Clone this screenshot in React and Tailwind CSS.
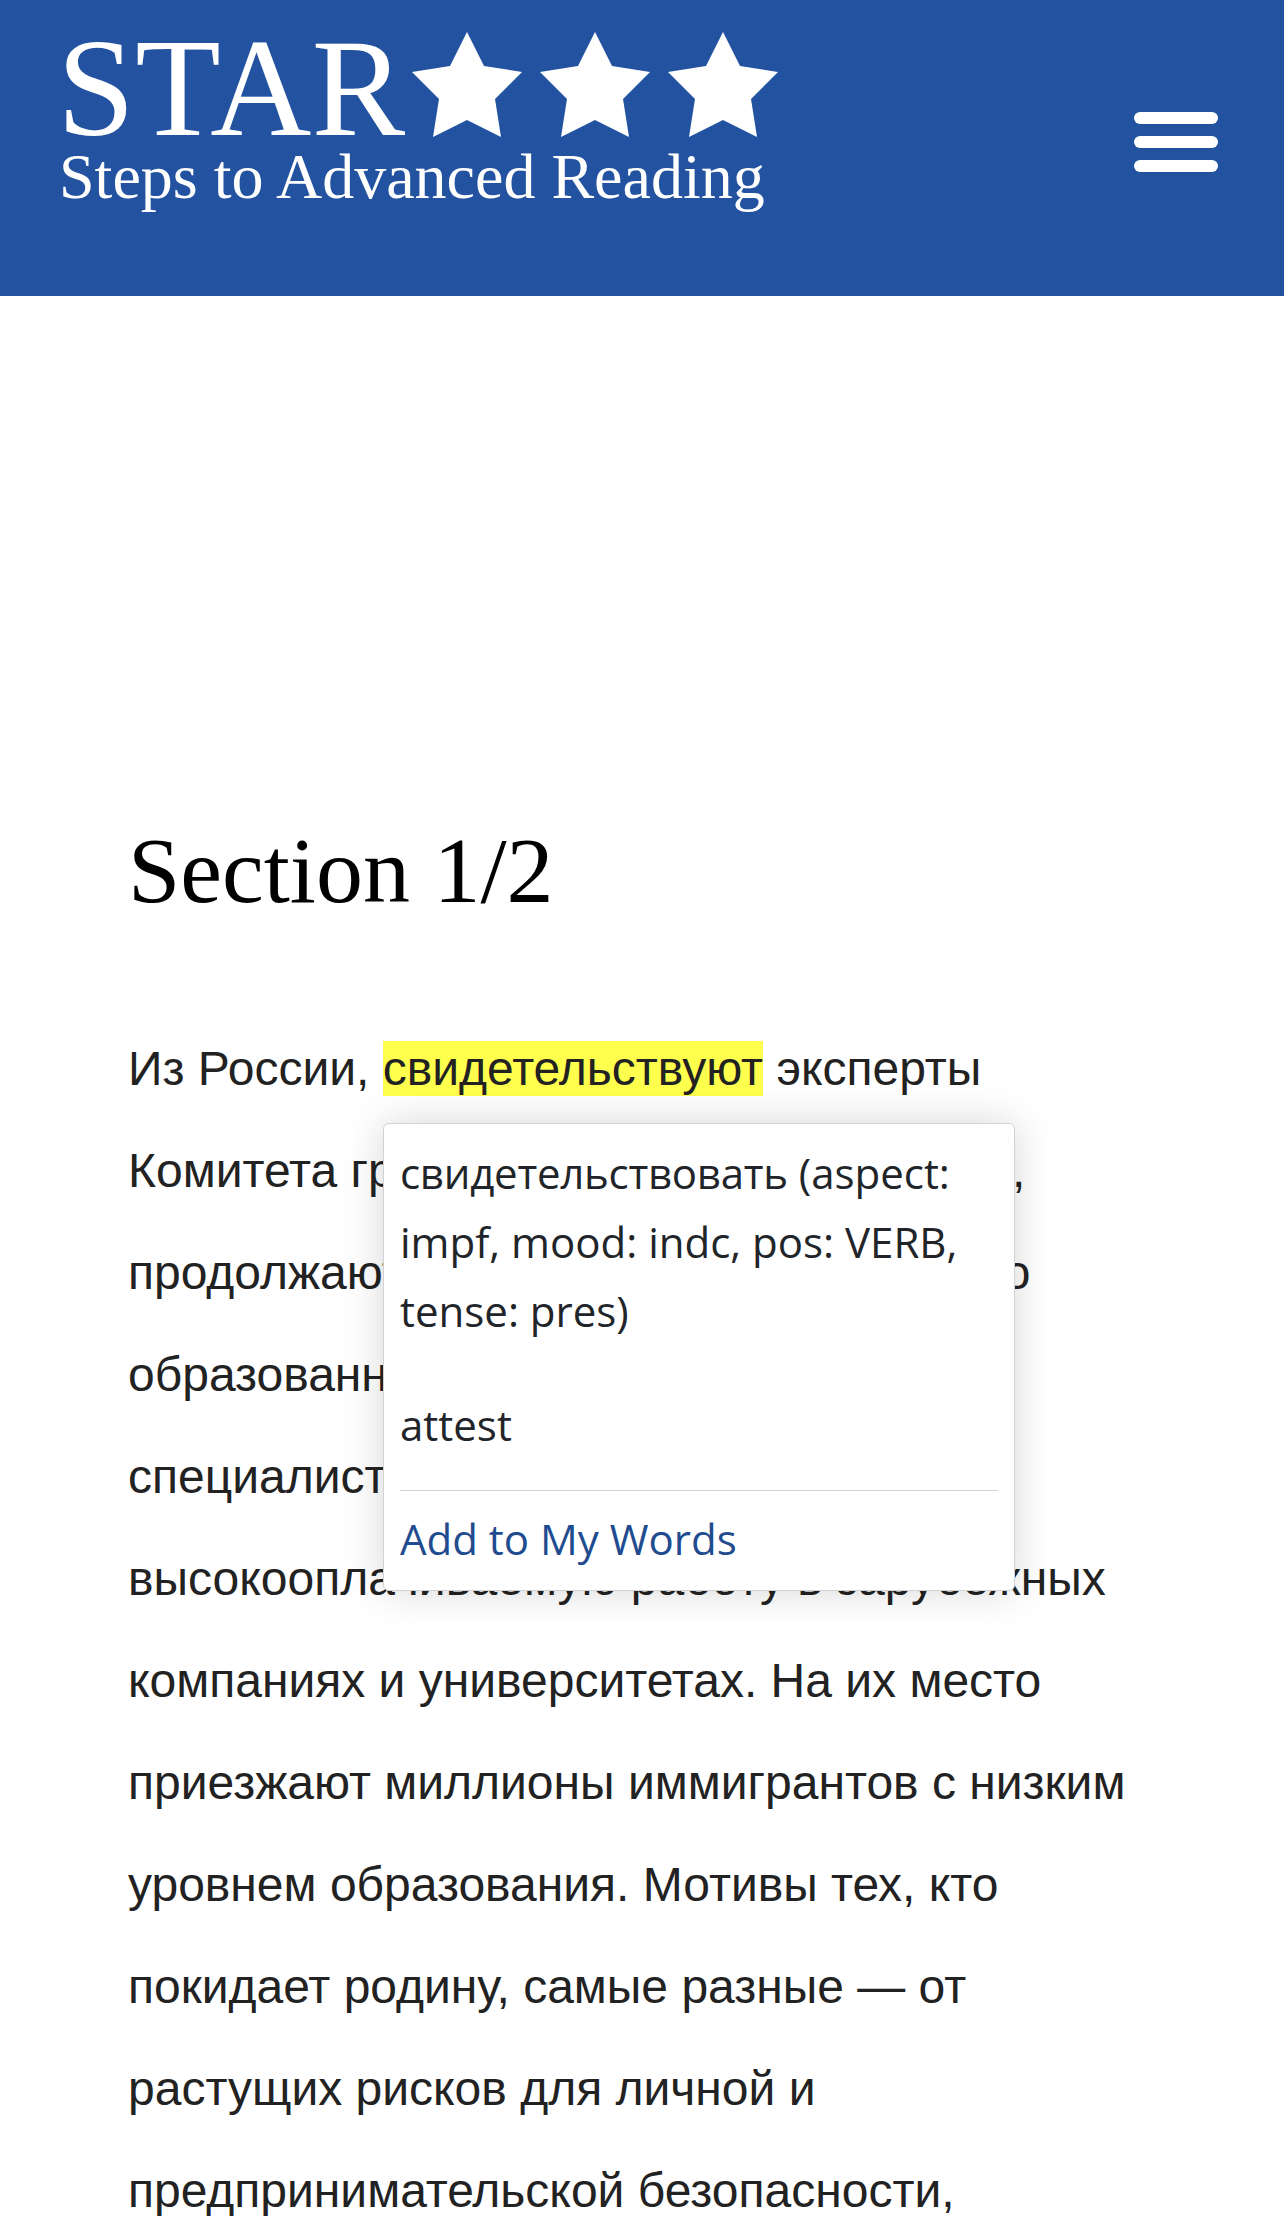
import React from "react";

function Star() {
  return (
    <svg width="112" height="105" viewBox="0 0 112 105" className="shrink-0">
      <path d="M56 0 L73 34 L111 40 L84 67 L90 105 L56 88 L22 105 L28 67 L1 40 L39 34 Z" fill="#fff" />
    </svg>
  );
}

function Logo() {
  return (
    <div className="text-white font-['Liberation_Serif',serif]">
      <div className="flex items-start h-[142px]">
        <span className="w-[354px] mt-[38px] text-[140px] leading-[100px] tracking-[0.5px]">STAR</span>
        <div className="flex gap-[16px] mt-[32px]">
          <Star />
          <Star />
          <Star />
        </div>
      </div>
      <div className="ml-[2px] text-[64px] leading-[70px]">Steps to Advanced Reading</div>
    </div>
  );
}

function Popup() {
  return (
    <div className="absolute left-[383px] top-[1123px] w-[632px] h-[468px] bg-white border border-[#d2d2d2] rounded-md shadow-[0_0_40px_rgba(0,0,0,0.16)] px-[16px] pt-[14px] font-['Open_Sans',sans-serif] text-[42px] leading-[69px] text-[#212529]">
      <p><span className="tracking-[-0.25px]">свидетельствовать</span> (aspect: impf, mood: indc, pos: VERB, tense: pres)</p>
      <p className="mt-[45px]">attest</p>
      <div className="mt-[31px] border-t border-[#d2d2d2] pt-[13px] text-[#1f4b8f]">Add to My Words</div>
    </div>
  );
}

export default function App() {
  return (
    <div className="relative h-[2216px] overflow-hidden bg-white">
      <header className="h-[296px] bg-[#2353a0] flex justify-between pl-[57px] pr-[66px]">
        <Logo />
        <div className="mt-[112px] flex flex-col gap-[12px]">
          <div className="w-[84px] h-[12px] rounded-md bg-white" />
          <div className="w-[84px] h-[12px] rounded-md bg-white" />
          <div className="w-[84px] h-[12px] rounded-md bg-white" />
        </div>
      </header>

      <main className="pl-[128px] pr-[128px]">
        <h2 className="mt-[519px] text-[94px] leading-[110px] text-black font-['Liberation_Serif',serif]">Section 1/2</h2>
        <p className="mt-[93px] text-[48px] leading-[102px] text-[#222] font-['Liberation_Sans',sans-serif]">
          Из России, <mark className="bg-[#ffff4d] text-[#222] py-px">свидетельствуют</mark> эксперты Комитета гражданских инициатив (КГИ), продолжают уезжать молодые и хорошо образованные и квалифицированные специалисты, которые находят высокооплачиваемую работу в зарубежных компаниях и университетах. На их место приезжают миллионы иммигрантов с низким уровнем образования. Мотивы тех, кто покидает родину, самые разные — от растущих рисков для личной и предпринимательской безопасности,
        </p>
      </main>

      <Popup />
    </div>
  );
}
